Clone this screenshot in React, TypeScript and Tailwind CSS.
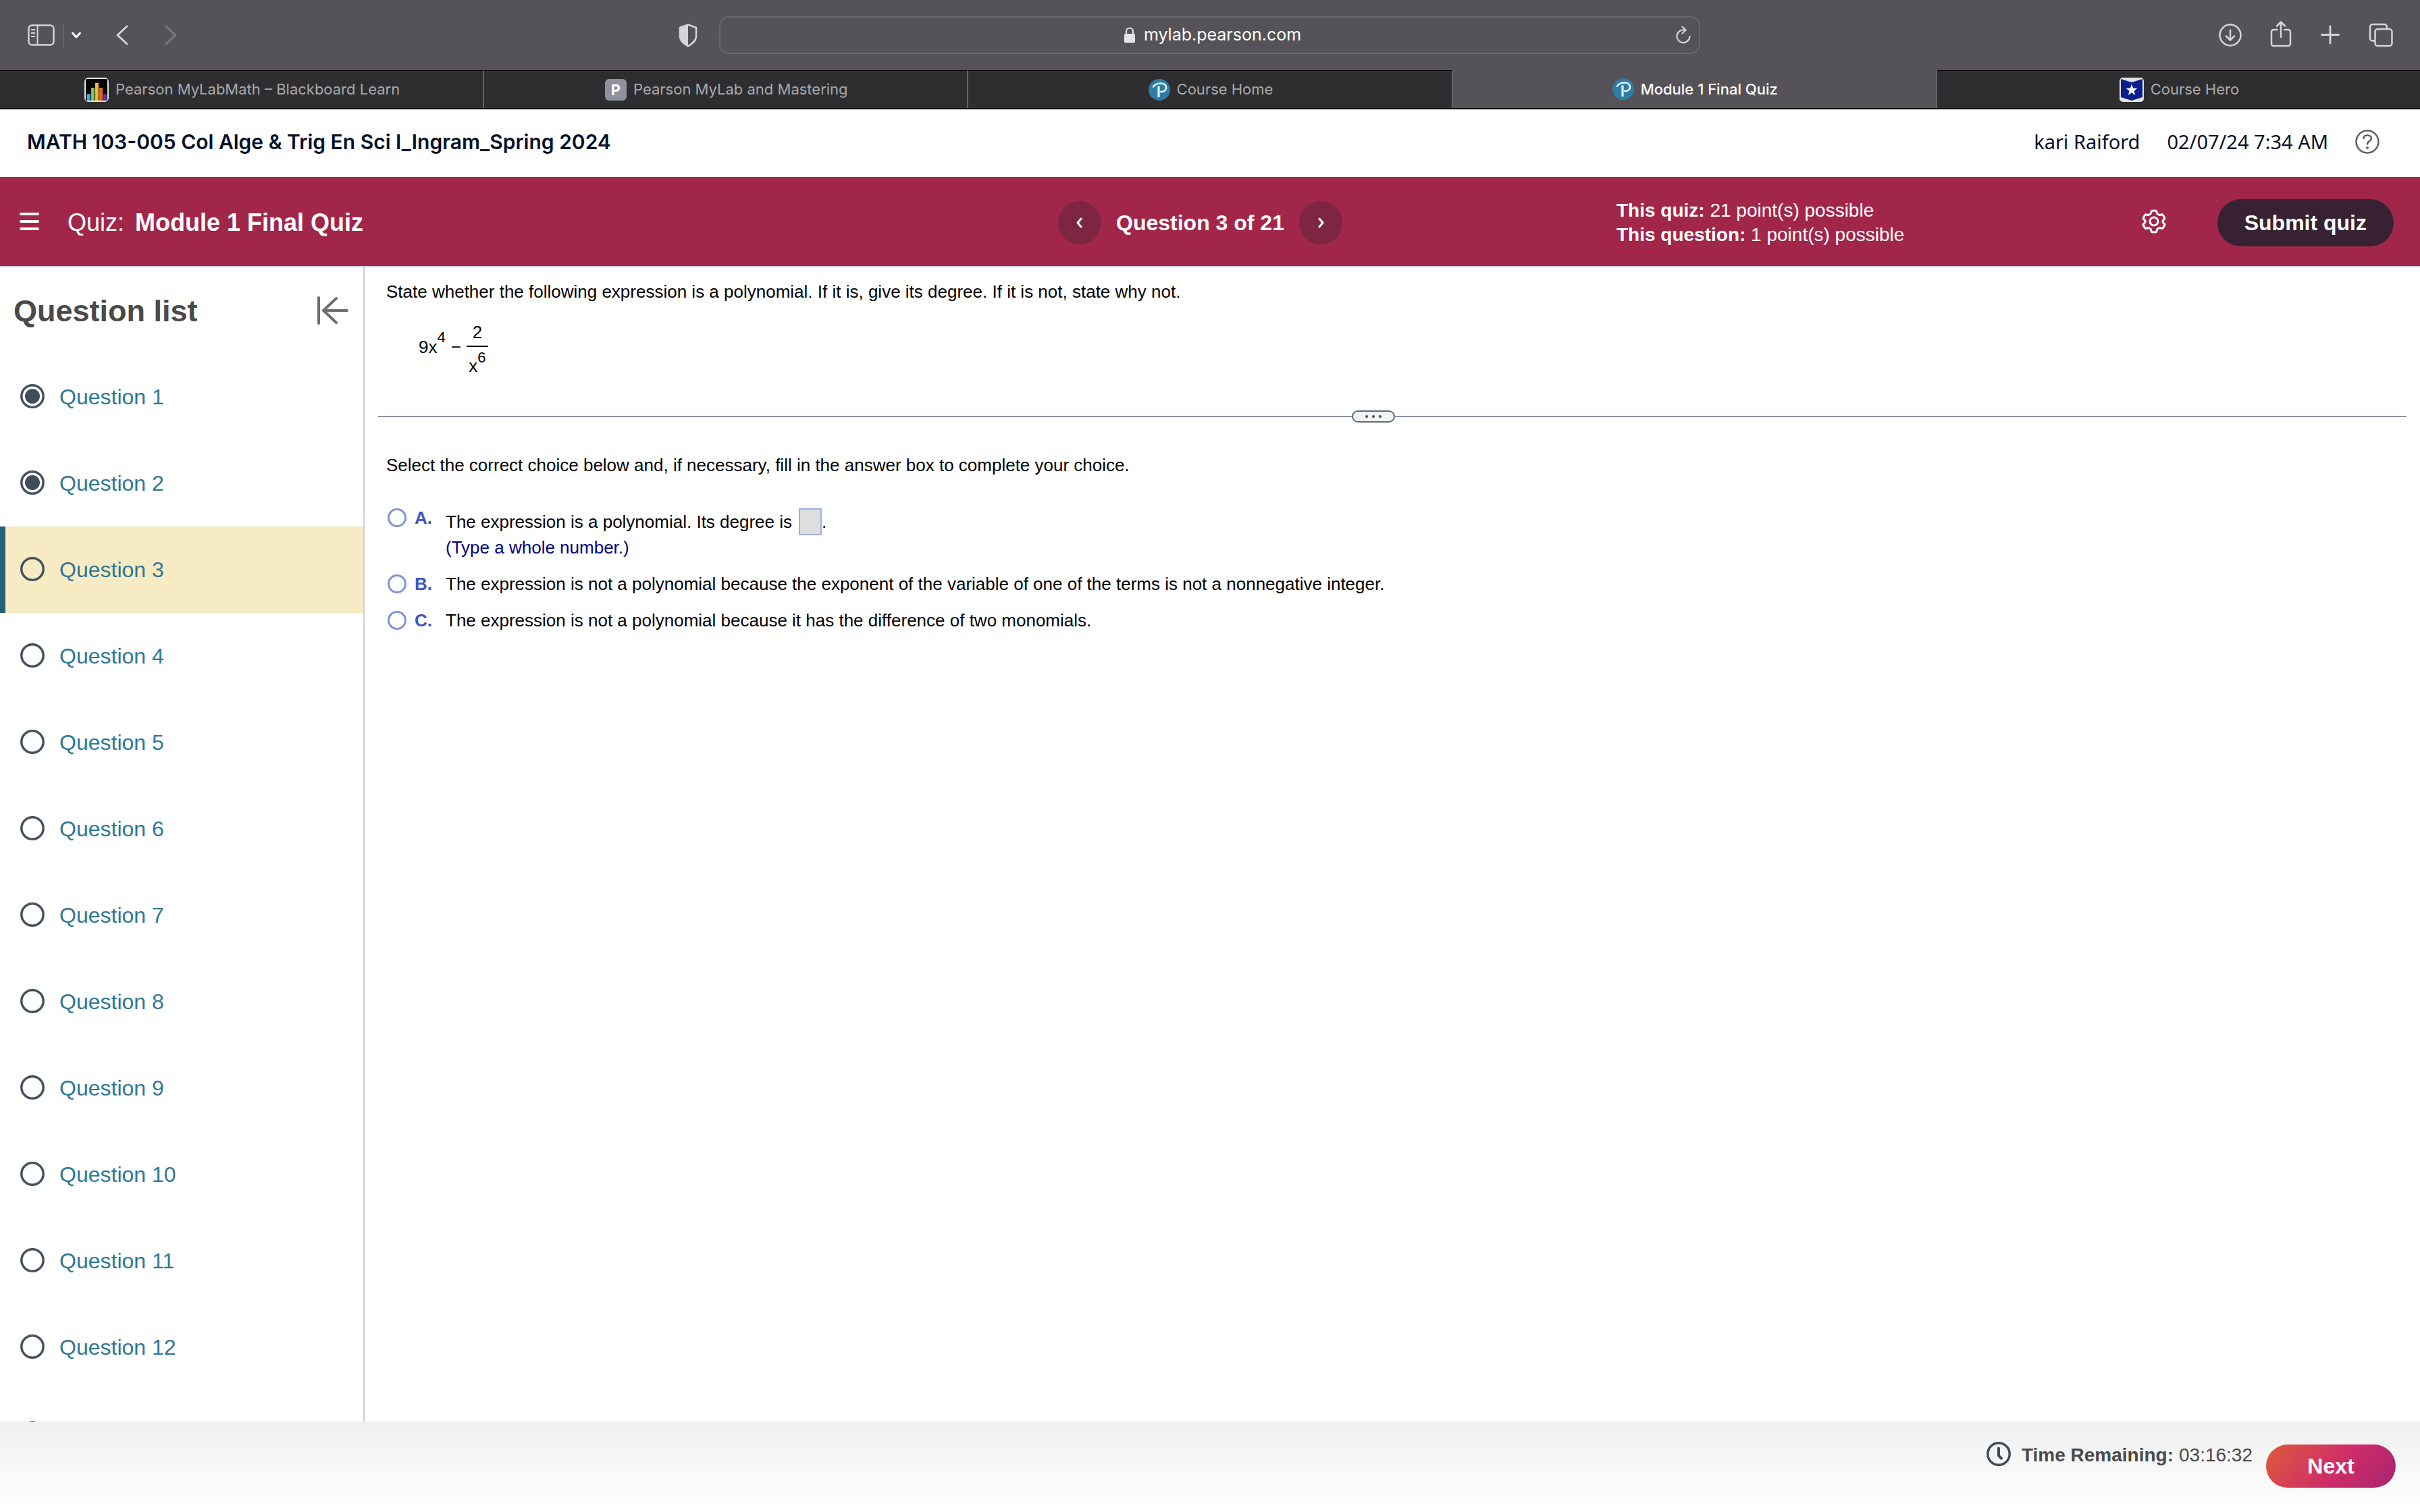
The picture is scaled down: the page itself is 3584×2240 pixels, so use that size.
import type { ReactNode } from 'react';

const ARIAL = "font-['Liberation_Sans',Arial,sans-serif]";
const INTER = 'font-[Inter,sans-serif]';
const NOTO = "font-['Noto_Sans',sans-serif]";

const LOADED_QUESTIONS = 13;
const ANSWERED = [1, 2];
const CURRENT = 3;

function PearsonMark() {
  return (
    <svg className="size-8" viewBox="0 0 32 32" fill="none">
      <circle cx="16" cy="16" r="16" fill="#2f7da3" />
      <path d="M7 11.500C10 7.500 14 6.500 18 6.500c5 0 8 2.500 8 6.200 0 4-3.500 6.300-8 6.300" stroke="#e6f1f6" strokeWidth="2.600" strokeLinecap="round" />
      <path d="M15 10.500V27" stroke="#e6f1f6" strokeWidth="3.200" />
    </svg>
  );
}

function ChartMark() {
  return (
    <svg className="size-9" viewBox="0 0 36 36">
      <rect width="36" height="36" rx="6" fill="#e4e4e4" />
      <rect x="2" y="2" width="32" height="32" rx="1" fill="#000" />
      <path d="M4 24h5v10H4z" fill="#3fa9e0" />
      <path d="M10 15h5v19h-5z" fill="#8cc152" />
      <path d="M16 8h5v26h-5z" fill="#f2b63c" />
      <path d="M22 15h5v19h-5z" fill="#e8632c" />
      <path d="M28 24h5v10h-5z" fill="#5f3a96" />
    </svg>
  );
}

function HeroMark() {
  return (
    <svg className="size-9" viewBox="0 0 36 36">
      <rect width="36" height="36" rx="5" fill="#e4e4e4" />
      <path d="M2 2l16 5 16-5v27l-16 5-16-5z" fill="#0a1f8f" />
      <path d="M18 9.500l2.100 6.200h6.500l-5.200 4 1.900 6.300-5.300-3.800-5.300 3.800 1.900-6.300-5.200-4h6.500z" fill="#fff" />
    </svg>
  );
}

function LetterMark() {
  return (
    <span className="grid size-8 place-items-center rounded-md bg-[#9090a0] text-[22px] font-bold leading-none text-white">P</span>
  );
}

function Tab({ icon, title, active = false }: { icon: ReactNode; title: string; active?: boolean }) {
  return (
    <button
      type="button"
      role="tab"
      aria-selected={active}
      className={
        active
          ? 'flex flex-1 items-center justify-center gap-2.5 bg-[#555358] pl-0.5 text-[22px] font-medium text-white border-r-2 border-[#656468] last:border-r-0'
          : 'flex flex-1 items-center justify-center gap-2.5 border-t border-t-black bg-[#2e2e30] pl-0.5 text-[22px] text-[#a9a9ab] border-r-2 border-r-[#656468] last:border-r-0'
      }
    >
      {icon}
      {title}
    </button>
  );
}

function BrowserChrome() {
  return (
    <header className={`${INTER} bg-[#555358]`}>
      <div className="grid h-26 grid-cols-[1065px_minmax(0,1453px)_1fr] items-center text-[#d6d4d8]">
        <div className="flex items-center pl-[41px] pr-8">
          <button type="button" aria-label="Sidebar">
            <svg className="h-8 w-10" viewBox="0 0 40 32" fill="none" stroke="currentColor" strokeWidth="2.500">
              <rect x="1.500" y="1.500" width="37" height="29" rx="5" />
              <path d="M14.500 2v28M5 8h6M5 13h6M5 18h6" strokeWidth="2" />
            </svg>
          </button>
          <span className="ml-3 h-9 w-0.5 bg-[#656468]" />
          <button type="button" aria-label="Tab groups" className="ml-2.5 text-white">
            <svg className="h-3 w-4" viewBox="0 0 16 12" fill="none" stroke="currentColor" strokeWidth="3" strokeLinecap="round" strokeLinejoin="round">
              <path d="M2.500 3l5.500 6 5.500-6" />
            </svg>
          </button>
          <button type="button" aria-label="Back" className="ml-[50px]">
            <svg className="h-8 w-5" viewBox="0 0 20 32" fill="none" stroke="currentColor" strokeWidth="3" strokeLinecap="round" strokeLinejoin="round">
              <path d="M17 3L3 16l14 13" />
            </svg>
          </button>
          <button type="button" aria-label="Forward" className="ml-13 text-[#7b797e]">
            <svg className="h-8 w-5" viewBox="0 0 20 32" fill="none" stroke="currentColor" strokeWidth="3" strokeLinecap="round" strokeLinejoin="round">
              <path d="M3 3l14 13L3 29" />
            </svg>
          </button>
          <button type="button" aria-label="Privacy report" className="ml-auto">
            <svg className="h-9 w-7" viewBox="0 0 28 36" fill="none">
              <path d="M14 2.500L26 7v13c0 6-5 10-12 14.500C7 30 2 26 2 20V7z" stroke="currentColor" strokeWidth="2.500" strokeLinejoin="round" />
              <path d="M14 2.500v32C7 30 2 26 2 20V7z" fill="currentColor" />
            </svg>
          </button>
        </div>

        <div className="flex h-14 items-center rounded-[14px] border-2 border-[#69676c] px-3">
          <div className="flex flex-1 items-center justify-center gap-3 pl-8 text-[25px] text-white">
            <svg className="h-6 w-4.5" viewBox="0 0 18 24" fill="none">
              <path d="M4 11V6.500a5 5 0 0110 0V11" stroke="#e4e3e6" strokeWidth="2.200" />
              <rect x="1" y="10" width="16" height="13.500" rx="2" fill="#e4e3e6" />
            </svg>
            mylab.pearson.com
          </div>
          <button type="button" aria-label="Reload">
            <svg className="h-7 w-6" viewBox="0 0 24 28" fill="none" stroke="currentColor" strokeWidth="2.200" strokeLinecap="round" strokeLinejoin="round">
              <path d="M15 6.500A9.500 9.500 0 1022.500 16M11.500 1.500L16.500 6.500l-5 5" />
            </svg>
          </button>
        </div>

        <div className="flex items-center justify-end gap-[41px] pr-10">
          <button type="button" aria-label="Downloads">
            <svg className="size-9" viewBox="0 0 36 36" fill="none" stroke="currentColor" strokeWidth="2.500" strokeLinecap="round" strokeLinejoin="round">
              <circle cx="18" cy="18" r="15.500" />
              <path d="M18 10.500v15M12 19.500l6 6 6-6" />
            </svg>
          </button>
          <button type="button" aria-label="Share" className="pb-1">
            <svg className="h-10 w-8" viewBox="0 0 32 40" fill="none" stroke="currentColor" strokeWidth="2.500" strokeLinecap="round" strokeLinejoin="round">
              <path d="M10.500 14H5a3 3 0 00-3 3v18a3 3 0 003 3h22a3 3 0 003-3V17a3 3 0 00-3-3h-5.500M16 25V2.500M10 8.500l6-6 6 6" />
            </svg>
          </button>
          <button type="button" aria-label="New tab">
            <svg className="size-8" viewBox="0 0 32 32" fill="none" stroke="currentColor" strokeWidth="2.800" strokeLinecap="round">
              <path d="M16 3v25M3.500 15.500h25" />
            </svg>
          </button>
          <button type="button" aria-label="Tab overview">
            <svg className="size-9" viewBox="0 0 36 36" fill="none" stroke="currentColor" strokeWidth="2.500">
              <rect x="9.500" y="9" width="25" height="25" rx="4" />
              <path d="M9 26.500H6a4 4 0 01-4-4V6a4 4 0 014-4h17a4 4 0 014 4v3" />
            </svg>
          </button>
        </div>
      </div>

      <div role="tablist" className="flex h-[58px] border-b-2 border-black">
        <Tab icon={<ChartMark />} title="Pearson MyLabMath – Blackboard Learn" />
        <Tab icon={<LetterMark />} title="Pearson MyLab and Mastering" />
        <Tab icon={<PearsonMark />} title="Course Home" />
        <Tab icon={<PearsonMark />} title="Module 1 Final Quiz" active />
        <Tab icon={<HeroMark />} title="Course Hero" />
      </div>
    </header>
  );
}

function CourseBar() {
  return (
    <div className="flex h-25 items-center bg-white pb-1 pl-10 pr-15 text-[#05112a]">
      <h1 className={`${INTER} text-[30px] font-semibold`}>MATH 103-005 Col Alge &amp; Trig En Sci I_Ingram_Spring 2024</h1>
      <span className={`${NOTO} ml-auto text-[29px]`}>kari Raiford</span>
      <span className={`${NOTO} ml-10 text-[29px]`}>02/07/24 7:34 AM</span>
      <button type="button" aria-label="Help" className="ml-10">
        <svg className="size-9" viewBox="0 0 36 36" fill="none" stroke="#5b6163" strokeWidth="2.500" strokeLinecap="round">
          <circle cx="18" cy="18" r="16.500" />
          <path d="M12.500 13c0-3 2.500-4.500 5.500-4.500s6 1.500 6 4.500c0 4-6 4-6 8.500" />
          <circle cx="18" cy="27" r="0.800" fill="#5b6163" />
        </svg>
      </button>
    </div>
  );
}

function RoundArrow({ label, d }: { label: string; d: string }) {
  return (
    <button type="button" aria-label={label} className="grid size-16 place-items-center rounded-full bg-[#7e2544]">
      <svg className="h-4 w-3" viewBox="0 0 12 16" fill="none" stroke="#fff" strokeWidth="3" strokeLinecap="round" strokeLinejoin="round">
        <path d={d} />
      </svg>
    </button>
  );
}

function QuizBar() {
  return (
    <div className="grid h-[134px] grid-cols-[1567px_827px_1fr] items-center border-b-2 border-[#cbcedb] bg-[#a1264a] pt-1 text-white">
      <div className="flex items-center pl-7 text-[36px]">
        <button type="button" aria-label="Menu">
          <svg className="mb-1 h-7 w-8" viewBox="0 0 32 28" fill="none" stroke="#fff" strokeWidth="4" strokeLinecap="round">
            <path d="M3 3h25M3 14h25M3 25h25" />
          </svg>
        </button>
        <span className="ml-10">Quiz:</span>
        <span className="ml-4 font-bold">Module 1 Final Quiz</span>
      </div>
      <div className="flex items-center gap-[22px]">
        <RoundArrow label="Previous question" d="M8 2L3 8l5 6" />
        <span className="text-[32px] font-bold">Question 3 of 21</span>
        <RoundArrow label="Next question" d="M4 2l5 6-5 6" />
      </div>
      <div className="flex items-center pr-[39px]">
        <div className="text-[28px] leading-9">
          <p><b>This quiz:</b> 21 point(s) possible</p>
          <p><b>This question:</b> 1 point(s) possible</p>
        </div>
        <button type="button" aria-label="Settings" className="mb-1 ml-auto">
          <svg className="size-9" viewBox="0 0 36 36" fill="none" stroke="#fff" strokeWidth="3" strokeLinejoin="round">
            <path d="M14.500 2.500q3.500-1 7 0L23 6.800l3 1.700 4.500-.7q2.500 2.500 3.500 6L31 17v2l3 3.500q-1 3.500-3.500 6L26 27.500l-3 1.700-1.500 4.300q-3.500 1-7 0L13 29.200l-3-1.700-4.500 1Q3 26 2 22.500L5 19v-2l-3-3.200q1-3.500 3.500-6l4.500.7 3-1.700z" />
            <circle cx="18" cy="18" r="6" />
          </svg>
        </button>
        <button type="button" className="ml-19 h-[70px] rounded-full bg-[#372132] px-10 text-[32px] font-bold">Submit quiz</button>
      </div>
    </div>
  );
}

function QuestionRow({ n }: { n: number }) {
  return (
    <li
      className={
        n === CURRENT
          ? 'h-32 shrink-0 border-l-8 border-[#265f78] bg-[#f7ebc3] pl-[22px]'
          : 'h-32 shrink-0 pl-[30px]'
      }
    >
      <a href={`#question-${n}`} className="flex h-full items-center gap-[22px] text-[32px] text-[#2f7896]">
        <svg className="mb-0.5 size-9" viewBox="0 0 36 36" fill="none">
          <circle cx="18" cy="18" r="16.200" stroke="#46525f" strokeWidth="3.500" />
          {ANSWERED.includes(n) && <circle cx="18" cy="18" r="11" fill="#414c5a" />}
        </svg>
        Question {n}
      </a>
    </li>
  );
}

function QuestionList() {
  return (
    <nav className="flex w-[540px] shrink-0 flex-col overflow-hidden border-r-2 border-[#cbcedb]">
      <div className="flex h-32 shrink-0 items-center justify-between pl-5 pr-[22px]">
        <h2 className="pt-0.5 text-[45px] font-bold text-[#4a4a4a]">Question list</h2>
        <button type="button" aria-label="Collapse question list">
          <svg className="h-11 w-12" viewBox="0 0 48 44" fill="none" stroke="#6a7070" strokeWidth="4" strokeLinecap="round" strokeLinejoin="round">
            <path d="M4 3v38M46 22H11M30 4L11 22l19 18" />
          </svg>
        </button>
      </div>
      <ul className="flex flex-col">
        {Array.from({ length: LOADED_QUESTIONS }, (_, i) => (
          <QuestionRow key={i} n={i + 1} />
        ))}
      </ul>
    </nav>
  );
}

function Choice({ letter, children }: { letter: string; children: ReactNode }) {
  const id = `choice-${letter}`;
  return (
    <div className="flex items-start">
      <input
        type="radio"
        name="choice"
        id={id}
        className="m-0 mt-0.5 size-7 shrink-0 appearance-none rounded-full border-3 border-[#8093d8] bg-white checked:bg-[#8093d8]"
      />
      <label htmlFor={id} className="ml-3 w-[46px] shrink-0 font-bold text-[#3d55c6]">{letter}.</label>
      <div>{children}</div>
    </div>
  );
}

function QuestionPane() {
  return (
    <main className="min-w-0 flex-1 pl-5 pr-5 text-[26px] leading-8 text-black">
      <p className="pl-3 pt-5">
        State whether the following expression is a polynomial. If it is, give its degree. If it is not, state why not.
      </p>

      <div className="mt-[26px] flex h-20 items-center pl-15">
        <span>9x</span>
        <span className="mb-7 text-[22px]">4</span>
        <span className="mx-2">−</span>
        <span className="flex flex-col items-center pt-1.5">
          <span className="px-2">2</span>
          <span className="mt-1 h-0.5 w-8 bg-black" />
          <span className="flex items-end">
            <span>x</span>
            <span className="mb-3 text-[22px]">6</span>
          </span>
        </span>
      </div>

      <div className="mt-[54px] flex items-center">
        <span className="h-0.5 grow basis-0 bg-[#8a92a3]" />
        <button type="button" aria-label="Resize panes" className="flex h-4.5 w-16 items-center justify-center gap-1.5 rounded-full border-2 border-[#5f6b7a] bg-[#f2f4f6]">
          <i className="size-1 rounded-full bg-[#484848]" />
          <i className="size-1 rounded-full bg-[#484848]" />
          <i className="size-1 rounded-full bg-[#484848]" />
        </button>
        <span className="h-0.5 grow basis-14 bg-[#8a92a3]" />
      </div>

      <div className="pl-3 pt-[47px]">
        <p>Select the correct choice below and, if necessary, fill in the answer box to complete your choice.</p>
        <div className="mt-[46px] flex flex-col gap-[22px] pl-0.5">
          <Choice letter="A">
            <div className="flex items-center pt-0.5">
              <label htmlFor="degree">The expression is a polynomial. Its degree is</label>
              <input id="degree" className="ml-2.5 h-10 w-[34px] border-2 border-[#9fb0e0] bg-[#dedede] text-center" />
              <span>.</span>
            </div>
            <p className="pt-0.5 text-[#000080]">(Type a whole number.)</p>
          </Choice>
          <Choice letter="B">
            The expression is not a polynomial because the exponent of the variable of one of the terms is not a nonnegative integer.
          </Choice>
          <Choice letter="C">The expression is not a polynomial because it has the difference of two monomials.</Choice>
        </div>
      </div>
    </main>
  );
}

function Footer() {
  return (
    <footer className="flex h-[134px] shrink-0 items-start justify-end bg-linear-to-b from-[#f0f0f0] to-white pr-9 text-[#4a4a4a]">
      <div className="mt-7 flex h-10 items-center text-[28px]">
        <svg className="size-9" viewBox="0 0 36 36" fill="none" stroke="#414c5a" strokeWidth="3.500" strokeLinecap="round" strokeLinejoin="round">
          <circle cx="18" cy="18" r="16.200" />
          <path d="M18 9.500v11l4 4" strokeWidth="4" />
        </svg>
        <b className="ml-4 pt-1">Time Remaining:</b>
        <span className="ml-2 pt-1">03:16:32</span>
      </div>
      <button
        type="button"
        className="ml-5 mt-8.5 h-16 w-48 rounded-full bg-linear-[125deg,#de5a3c,#cf2d68_55%,#a9246f] text-[32px] font-bold text-white"
      >
        Next
      </button>
    </footer>
  );
}

export default function App() {
  return (
    <div className={`${ARIAL} flex h-screen flex-col overflow-hidden bg-white`}>
      <BrowserChrome />
      <CourseBar />
      <QuizBar />
      <div className="flex min-h-0 flex-1">
        <QuestionList />
        <QuestionPane />
      </div>
      <Footer />
    </div>
  );
}
